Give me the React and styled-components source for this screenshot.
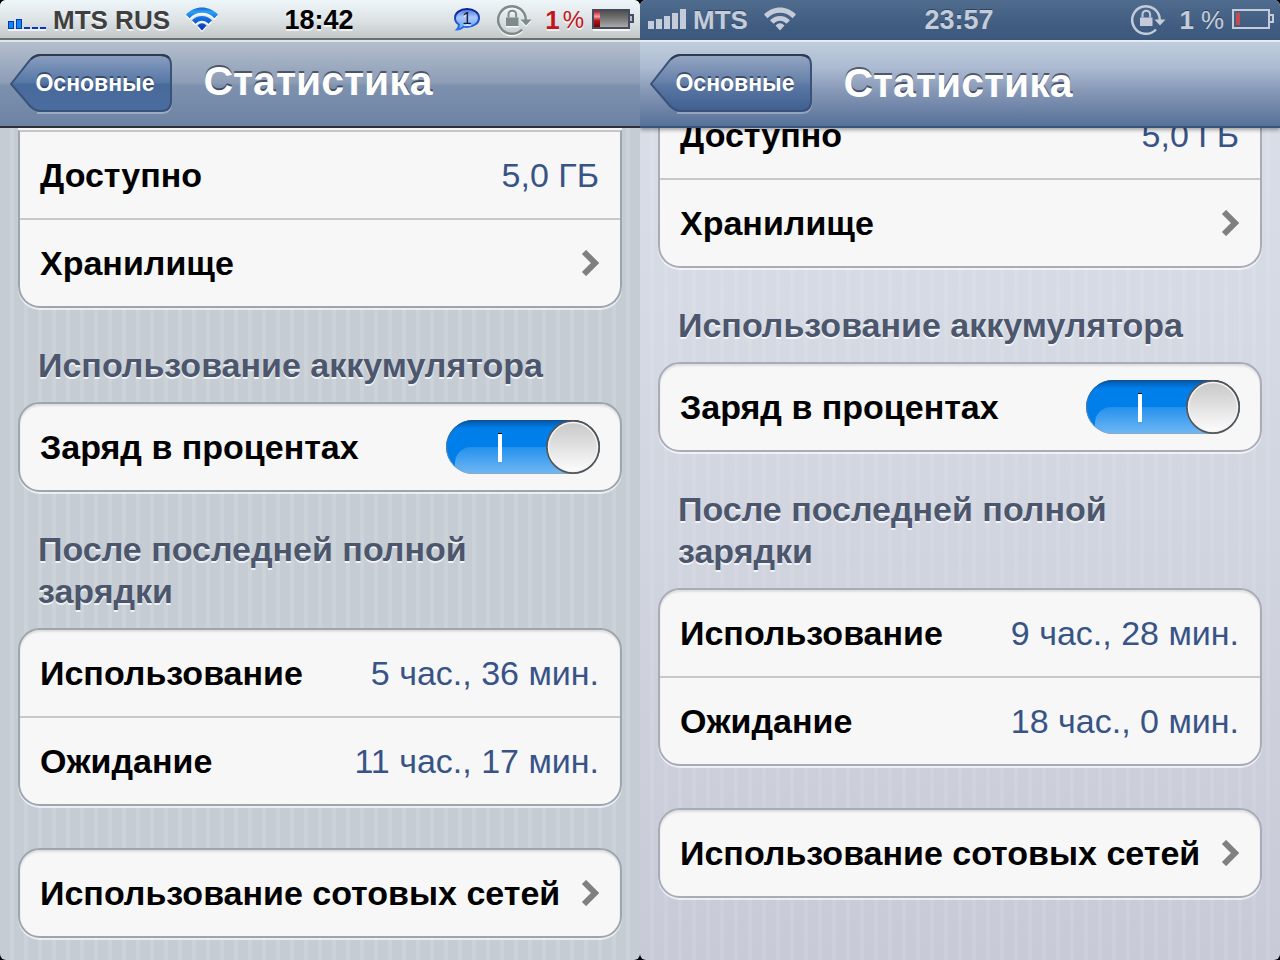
import React, { useId, useState } from 'react'
import styled, { createGlobalStyle, css } from 'styled-components'

const GlobalStyle = createGlobalStyle`
  * {
    box-sizing: border-box;
  }
  body {
    margin: 0;
    background: #000;
    font-family: "Liberation Sans", Arial, sans-serif;
  }
`;

const Screens = styled.main`
  display: grid;
  grid-template-columns: 1fr 1fr;
  min-height: 100vh;
`;

const Phone = styled.section`
  display: flex;
  flex-direction: column;
  overflow: hidden;
  border-radius: 6px;
  background: ${({ $silver }) => $silver
        ? 'repeating-linear-gradient(90deg, #c5ccd4 0 10px, #cbd2d8 10px 14px)'
        : 'repeating-linear-gradient(90deg, rgba(255,255,255,0) 0 10px, rgba(255,255,255,0.08) 10px 14px), linear-gradient(#dbe0ea, #d3d7e1 45%, #c8cbd7)'};
`;

const StatusBar = styled.div`
  display: grid;
  grid-template-columns: 1fr auto 1fr;
  align-items: center;
  height: 40px;
  padding: 0 6px 0 8px;
  font-size: 26px;
  line-height: 40px;
  font-weight: bold;
  white-space: nowrap;
  ${({ $silver }) => $silver
        ? css`
    color: #3f3f3f;
    background: linear-gradient(#eff6f9, #dde3e5 50%, #c0c6c6);
    box-shadow: inset 0 -2px 0 #697070;
    text-shadow: 0 2px 0 rgba(255,255,255,0.7);
  `
        : css`
    color: #c3ccd8;
    background: linear-gradient(#4f6b8d, #3f5b80 70%, #3e5a7f);
    text-shadow: 0 -1px 0 rgba(20,35,60,0.5);
  `}
`;

const StatusGroup = styled.div`
  display: flex;
  align-items: center;
  gap: ${({ $gap }) => $gap}px;
  justify-content: ${({ $end }) => ($end ? 'flex-end' : 'flex-start')};
`;

const Carrier = styled.span`
  margin-right: 9px;
`;

const Clock = styled.time`
  padding-right: 4px;
  color: ${({ $silver }) => ($silver ? '#000' : 'inherit')};
  font-size: 27px;
`;

const Percent = styled.span`
  display: flex;
  gap: ${({ $silver }) => ($silver ? 3 : 7)}px;
  margin: 0 -8px 0 -3px;
  color: ${({ $silver }) => ($silver ? '#c4141c' : 'inherit')};
`;

const PercentSign = styled.span`
  font-size: ${({ $silver }) => ($silver ? 24 : 26)}px;
  font-weight: normal;
`;

const NavBar = styled.header`
  display: grid;
  grid-template-columns: 1fr auto 1fr;
  align-items: center;
  height: 88px;
  padding: 0 10px;
  border-top: 2px solid ${({ $silver }) => ($silver ? '#dfe5ea' : '#e6ecf3')};
  border-bottom: 2px solid ${({ $silver }) => ($silver ? '#2d3036' : '#37547c')};
  background: ${({ $silver }) => $silver
        ? 'linear-gradient(#b4bfce, #8d9db6 48%, #7d91af 52%, #6d83a3)'
        : 'linear-gradient(#bfcddd, #adbbd2 30%, #8798b7 58%, #567198)'};
  box-shadow: ${({ $silver }) => ($silver ? 'none' : '0 2px 4px rgba(0,0,0,0.35)')};
  z-index: 1;
`;

const BackButton = styled.button`
  position: relative;
  justify-self: start;
  width: 162px;
  height: 60px;
  padding: 0 0 2px 8px;
  border: 0;
  background: none;
  color: #fff;
  font: bold 23px "Liberation Sans", Arial, sans-serif;
  text-shadow: 0 -2px 0 rgba(30,45,75,0.65);
  cursor: pointer;
`;

const BackShape = styled.svg`
  position: absolute;
  left: 0;
  top: 0;
`;

const BackLabel = styled.span`
  position: relative;
`;

const Title = styled.h1`
  margin: 0;
  padding: 0 4px ${({ $silver }) => ($silver ? 6 : 2)}px 0;
  color: #fff;
  font-size: 41px;
  line-height: 48px;
  text-shadow: 0 -2px 0 rgba(40,50,65,0.7);
`;

const Content = styled.div`
  flex: 1;
  overflow: hidden;
  padding: 0 18px 22px;
`;

const ScrolledList = styled.div`
  margin-top: ${({ $offset }) => -$offset}px;
`;

const Card = styled.div`
  border: 2px solid ${({ $silver }) => ($silver ? '#9da5af' : '#a6adb9')};
  border-radius: 22px;
  background: #f7f7f7;
  box-shadow: 0 2px 0 rgba(255,255,255,0.65), inset 0 2px 2px rgba(0,0,0,0.1);
  ${({ $cut }) => $cut && css`
    border-top-color: #c6c6c6;
    border-top-left-radius: 0;
    border-top-right-radius: 0;
    box-shadow: 0 2px 0 rgba(255,255,255,0.65), 0 -2px 0 #f7f7f7;
  `}
  ${({ $spaced }) => $spaced && 'margin-top: 42px;'}
`;

const rowBase = css`
  display: flex;
  align-items: center;
  justify-content: space-between;
  width: 100%;
  height: 86px;
  padding: 0 20px;
  color: #000;
  font-size: 34px;
  line-height: 42px;
  font-weight: bold;
  white-space: nowrap;
`;

const Row = styled.div`
  ${rowBase}
  & + & {
    height: 88px;
    border-top: 2px solid #c8c8c8;
  }
`;

const LinkRow = styled.a`
  ${rowBase}
  text-decoration: none;
  ${({ $divided }) => $divided && css`
    height: 88px;
    border-top: 2px solid #c8c8c8;
  `}
`;

const Value = styled.span`
  padding-right: 1px;
  color: #385487;
  font-weight: normal;
`;

const SectionTitle = styled.h2`
  margin: 0;
  max-width: 500px;
  padding: 36px 0 16px 20px;
  color: #4c566c;
  font-size: 34px;
  line-height: 42px;
  text-shadow: 0 2px 0 rgba(255,255,255,0.75);
  ${({ $wide }) => $wide && 'max-width: none;'}
`;

const Switch = styled.span`
  position: relative;
  display: block;
  width: 154px;
  height: 54px;
`;

const SwitchInput = styled.input`
  position: absolute;
  inset: 0;
  width: 100%;
  height: 100%;
  margin: 0;
  opacity: 0;
  z-index: 1;
  cursor: pointer;
`;

const Bars = ({ silver }) => (
    <svg width="38" height="40" viewBox="0 0 38 40" shapeRendering="crispEdges">
        {silver ? (
            <>
                <path d="M0 29h38v2H0z" fill="#fff" opacity=".7" />
                <path d="M0 21h6v8H0zM8 19h6v10H8z" fill="#0638b4" />
                <path d="M1 22h4v6H1zM9 20h4v8H9z" fill="#0f86f0" />
                <path d="M16 27h6v2h-6zM24 27h6v2h-6zM32 27h6v2h-6z" fill="#0636c0" />
            </>
        ) : (
            <path d="M0 21h6v8H0zM8 19h6v10H8zM16 16h6v13h-6zM24 13h6v16h-6zM32 9h6v20h-6z" fill="#c3ccd8" />
        )}
    </svg>
);

const Wifi = ({ silver }) => {
    const id = useId()
    const shape = (
        <>
            <path d="M0 8.500C9-.8 23-.8 32 8.500L28.500 12.200C21.500 5 10.500 5 3.500 12.200Z" />
            <path d="M6 14.200C11.500 8.500 20.500 8.500 26 14.200L22.500 17.800C18.500 13.800 13.500 13.800 9.500 17.800Z" />
            <path d="M11.500 19.500Q16 15 20.500 19.500L16 24.500Z" />
        </>
    );
    return (
        <svg width="32" height="28" viewBox="0 0 32 28">
            <defs>
                <linearGradient id={id} x1="0" y1="0" x2="0" y2="24" gradientUnits="userSpaceOnUse">
                    <stop offset="0" stopColor="#0f55c4" />
                    <stop offset=".25" stopColor="#2ba2f3" />
                    <stop offset=".5" stopColor="#1470e3" />
                    <stop offset="1" stopColor="#0435bb" />
                </linearGradient>
            </defs>
            {silver && <g fill="#fff" opacity=".75" transform="translate(0 2)">{shape}</g>}
            <g fill={silver ? `url(#${id})` : '#c3ccd8'}>{shape}</g>
        </svg>
    )
};

const Bubble = () => (
    <svg width="28" height="26" viewBox="0 0 28 26">
        <defs>
            <linearGradient id="bubble-fill" x1="0" y1="0" x2="0" y2="1">
                <stop offset="0" stopColor="#4e74dc" />
                <stop offset=".4" stopColor="#a9c6fb" />
                <stop offset="1" stopColor="#62a6fb" />
            </linearGradient>
            <linearGradient id="bubble-line" x1="0" y1="0" x2="0" y2="1">
                <stop offset="0" stopColor="#0a1f95" />
                <stop offset="1" stopColor="#2775ea" />
            </linearGradient>
        </defs>
        <path d="M14 2C7 2 2 6 2 11c0 3 1.500 5 4 6.500 0 2-.5 3.500-2 5 3 0 5-1 6.500-3 1 .3 2 .4 3.500.4 7 0 12-4 12-9S21 2 14 2z" fill="url(#bubble-fill)" stroke="url(#bubble-line)" strokeWidth="2" />
        <text x="14" y="17" textAnchor="middle" fontSize="17" fontWeight="normal" fontFamily="Liberation Sans" fill="#101840">1</text>
    </svg>
);

const RotationLock = ({ silver }) => {
    const shape = (color) => (
        <g fill={color} stroke={color}>
            <path d="M25 26.500A13.800 13.800 0 1 1 28.800 17" fill="none" strokeWidth="2.500" />
            <path d="M23.500 16.500h11l-5.500 6z" stroke="none" />
            <path d="M9 14.500h12.500v8.500h-12.500z" stroke="none" />
            <path d="M11.500 14.500v-3a3.800 3.800 0 0 1 7.600 0v3" fill="none" strokeWidth="2" />
        </g>
    );
    return (
        <svg width="35" height="34" viewBox="0 0 35 34">
            {silver && <g transform="translate(0 1.500)">{shape('#f4f7f8')}</g>}
            {shape(silver ? '#7f8a8a' : '#c3ccd8')}
        </svg>
    )
};

const Battery = ({ silver }) => (
    <svg width="42" height="24" viewBox="0 0 42 24">
        <defs>
            <linearGradient id="battery-body" x1="0" y1="0" x2="0" y2="1">
                <stop offset="0" stopColor="#4c4c4c" />
                <stop offset=".5" stopColor="#777" />
                <stop offset="1" stopColor="#b0b0b0" />
            </linearGradient>
            <linearGradient id="battery-charge" x1="0" y1="0" x2="0" y2="1">
                <stop offset="0" stopColor="#c11420" />
                <stop offset=".35" stopColor="#f0a0a0" />
                <stop offset=".6" stopColor="#b61218" />
                <stop offset="1" stopColor="#700" />
            </linearGradient>
        </defs>
        {silver ? (
            <>
                <path d="M1 20h37v3H1z" fill="#fff" opacity=".8" />
                <path d="M1 2h36v18H1z" fill="url(#battery-body)" stroke="#454b60" strokeWidth="2" />
                <path d="M2 3h6v16H2z" fill="url(#battery-charge)" />
                <path d="M38 7h3v7h-3" fill="#b8bcc4" stroke="#454b60" strokeWidth="2" />
            </>
        ) : (
            <>
                <path d="M1 2h36v18H1zM38 7h3v7h-3" fill="none" stroke="#c3ccd8" strokeWidth="2" />
                <path d="M4 5h4v12H4z" fill="#c74a4c" />
            </>
        )}
    </svg>
);

const Chevron = () => (
    <svg width="20" height="26" viewBox="0 0 20 26">
        <path d="M4 2l11 11L4 24" fill="none" stroke="#808080" strokeWidth="6" />
    </svg>
);

const Back = ({ silver }) => {
    const id = useId()
    return (
        <BackButton type="button">
            <BackShape width="162" height="60" viewBox="0 0 162 60" aria-hidden="true">
                <defs>
                    <linearGradient id={id} x1="0" y1="0" x2="0" y2="1">
                        <stop offset="0" stopColor={silver ? '#8aa0c0' : '#95a6c2'} />
                        <stop offset=".5" stopColor={silver ? '#5576a5' : '#647fa8'} />
                        <stop offset=".52" stopColor={silver ? '#486a9b' : '#5d79a4'} />
                        <stop offset="1" stopColor={silver ? '#4a6d9f' : '#3e5f91'} />
                    </linearGradient>
                </defs>
                <path d="M27 59h124q10 0 10-10" fill="none" stroke="#fff" strokeOpacity=".3" strokeWidth="2" />
                <path d="M1 30L20 6Q25 1 31 1H151Q161 1 161 11V47Q161 57 151 57H31Q25 57 20 52Z" fill={`url(#${id})`} stroke="#3a5178" strokeWidth="2" />
                <path d="M21 5Q25 1 31 1H151Q156 1 159 4" fill="none" stroke="#2f3a4d" strokeWidth="2" />
            </BackShape>
            <BackLabel>Основные</BackLabel>
        </BackButton>
    )
};

const Toggle = ({ id }) => {
    const [on, setOn] = useState(true)
    const grad = useId()
    return (
        <Switch>
            <SwitchInput id={id} type="checkbox" checked={on} onChange={() => { setOn(!on); }} />
            <svg width="154" height="54" viewBox="0 0 154 54">
                <defs>
                    <linearGradient id={`${grad}t`} x1="0" y1="0" x2="0" y2="1">
                        <stop offset="0" stopColor={on ? '#0055a8' : '#aaa'} />
                        <stop offset=".16" stopColor={on ? '#007fea' : '#eee'} />
                        <stop offset="1" stopColor={on ? '#007fea' : '#f6f6f6'} />
                    </linearGradient>
                    <linearGradient id={`${grad}g`} x1="0" y1="27" x2="0" y2="54" gradientUnits="userSpaceOnUse">
                        <stop offset="0" stopColor="#fff" stopOpacity=".14" />
                        <stop offset="1" stopColor="#fff" stopOpacity=".44" />
                    </linearGradient>
                    <linearGradient id={`${grad}k`} x1="0" y1="0" x2="0" y2="1">
                        <stop offset="0" stopColor="#c8c8c8" />
                        <stop offset="1" stopColor="#fcfcfc" />
                    </linearGradient>
                    <linearGradient id={`${grad}s`} x1="0" y1="0" x2="0" y2="1">
                        <stop offset="0" stopColor="#174f86" />
                        <stop offset="1" stopColor="#8aa9ca" />
                    </linearGradient>
                    <clipPath id={`${grad}c`}>
                        <rect width="154" height="54" rx="27" />
                    </clipPath>
                </defs>
                <g clipPath={`url(#${grad}c)`}>
                    <rect width="154" height="54" fill={`url(#${grad}t)`} />
                    {on && <rect x="9" y="27" width="160" height="40" rx="16" fill={`url(#${grad}g)`} />}
                </g>
                <rect x=".5" y=".5" width="153" height="53" rx="26.500" fill="none" stroke={`url(#${grad}s)`} />
                {on && <path d="M52 13h4v2h-4z" fill="#111" />}
                {on && <path d="M52 14h4v28h-4z" fill="#fff" />}
                <circle cx={on ? 127 : 27} cy="27" r="27" fill="#555" />
                <circle cx={on ? 127 : 27} cy="27" r="24.500" fill={`url(#${grad}k)`} stroke="#f4f4f4" strokeWidth="1.500" />
            </svg>
        </Switch>
    )
};

const StatisticsScreen = ({ silver, carrier, time, offset, usage, standby, name }) => {
    const switchId = `percent-${name}`;
    return (
        <Phone $silver={silver}>
            <StatusBar $silver={silver}>
                <StatusGroup $gap={7}>
                    <Bars silver={silver} />
                    <Carrier>{carrier}</Carrier>
                    <Wifi silver={silver} />
                </StatusGroup>
                <Clock $silver={silver}>{time}</Clock>
                <StatusGroup $gap={16} $end>
                    {silver && <Bubble />}
                    <RotationLock silver={silver} />
                    <Percent $silver={silver}>
                        <span>1</span>
                        <PercentSign $silver={silver}>%</PercentSign>
                    </Percent>
                    <Battery silver={silver} />
                </StatusGroup>
            </StatusBar>
            <NavBar $silver={silver}>
                <Back silver={silver} />
                <Title $silver={silver}>Статистика</Title>
            </NavBar>
            <Content>
                <ScrolledList $offset={offset}>
                    <Card $silver={silver} $cut>
                        <Row>
                            <span>Доступно</span>
                            <Value>5,0 ГБ</Value>
                        </Row>
                        <LinkRow href="#" $divided>
                            <span>Хранилище</span>
                            <Chevron />
                        </LinkRow>
                    </Card>
                    <SectionTitle $wide>Использование аккумулятора</SectionTitle>
                    <Card $silver={silver}>
                        <Row>
                            <label htmlFor={switchId}>Заряд в процентах</label>
                            <Toggle id={switchId} />
                        </Row>
                    </Card>
                    <SectionTitle>После последней полной зарядки</SectionTitle>
                    <Card $silver={silver}>
                        <Row>
                            <span>Использование</span>
                            <Value>{usage}</Value>
                        </Row>
                        <Row>
                            <span>Ожидание</span>
                            <Value>{standby}</Value>
                        </Row>
                    </Card>
                    <Card $silver={silver} $spaced>
                        <LinkRow href="#">
                            <span>Использование сотовых сетей</span>
                            <Chevron />
                        </LinkRow>
                    </Card>
                </ScrolledList>
            </Content>
        </Phone>
    )
};

export default function App() {
    return (
        <>
            <GlobalStyle />
            <Screens>
                <StatisticsScreen
                    name="left"
                    silver
                    carrier="MTS RUS"
                    time="18:42"
                    offset={-2}
                    usage="5 час., 36 мин."
                    standby="11 час., 17 мин."
                />
                <StatisticsScreen
                    name="right"
                    carrier="MTS"
                    time="23:57"
                    offset={38}
                    usage="9 час., 28 мин."
                    standby="18 час., 0 мин."
                />
            </Screens>
        </>
    )
}
